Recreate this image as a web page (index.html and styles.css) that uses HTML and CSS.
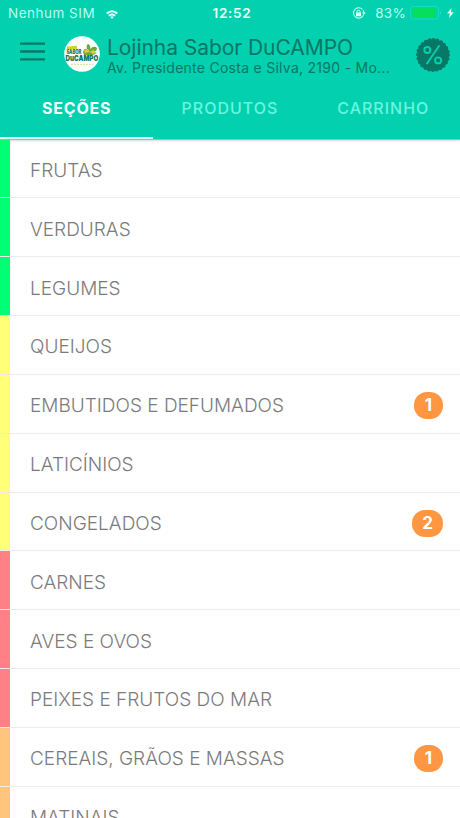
FILE: index.html
```html
<!DOCTYPE html>
<html lang="pt-BR">
<head>
<meta charset="utf-8">
<title>Lojinha Sabor DuCAMPO</title>
<link rel="stylesheet" href="styles.css">
</head>
<body>
<div class="app">
  <header class="header">
    <div class="status">
      <div class="carrier"><span class="sim">Nenhum SIM</span>
        <svg class="wifi" width="12" height="9" viewBox="0 0 12 9"><g fill="none" stroke="#e6fffa" stroke-width="2"><path d="M.7 3.5Q6-1 11.3 3.5"/><path d="M2.8 5.8Q6 3.1 9.2 5.8"/></g><path d="M4.2 7Q6 5.6 7.8 7L6 8.9Z" fill="#e6fffa"/></svg>
      </div>
      <time class="clock">12:52</time>
      <div class="power">
        <svg class="lock" width="14" height="13" viewBox="0 0 14 13"><path d="M10.5 2.4A5.2 5.2 0 1 0 11.6 7.6M11 3.3Q11.7 4.4 11.8 6" fill="none" stroke="#c5fff3" stroke-width="1.1"/><path d="M9.9 5.5h3.8L11.8 8z" fill="#c5fff3"/><rect x="4" y="5.5" width="5" height="3.7" rx=".5" fill="#e6fffa"/><path d="M5 5.7V4.6a1.5 1.5 0 0 1 3 0v1.1" fill="none" stroke="#e6fffa"/></svg>
        <span class="percent">83%</span>
        <svg class="battery" width="32" height="14" viewBox="0 0 32 14"><rect x=".6" y=".6" width="28" height="12.4" rx="3" fill="none" stroke="#1cdcc4" stroke-width="1"/><rect x="2.2" y="2.2" width="23.3" height="9.2" rx="1.4" fill="#05df5c"/><path d="M30.2 4.8Q32 6.8 30.2 8.8Z" fill="#35dfcd"/></svg>
        <svg class="bolt" width="7" height="10" viewBox="0 0 7 10"><path d="M4.5 0 0 5.4h2.8L2 10l4.8-5.8H4Z" fill="#e6fffa"/></svg>
      </div>
    </div>
    <div class="brand">
      <svg class="menu" width="25" height="19" viewBox="0 0 25 19"><path d="M0 1.6h25M0 9.5h25M0 17.3h25" stroke="#087766" stroke-width="2.3"/></svg>
      <svg class="logo" width="36" height="36" viewBox="0 0 36 36">
        <circle cx="18" cy="18" r="17.8" fill="#fff"/>
        <path d="m3 10.5 10-.8v3L3 13.5z" fill="#c9d72d"/>
        <path d="M19 16q1-4 4-3-1-4 1-5 3 1 2 5 4-4 7-1 0 4-5 4l5 1-4 2H20z" fill="#64ad45"/>
        <path d="m20 14 4-1 2 3-5 1zm6 2 3-2 3 2-3 2z" fill="#e4ca37"/>
        <text class="logo-small" x="2.4" y="18.4" textLength="15" lengthAdjust="spacingAndGlyphs">SABOR</text>
        <text class="logo-large" x="1.6" y="25.4" textLength="32.6" lengthAdjust="spacingAndGlyphs">DuCAMPO</text>
        <path d="M7 28.3h22" stroke="#d6df78" stroke-width="1" stroke-dasharray="2 1"/>
      </svg>
      <div class="shop"><h1 class="name">Lojinha Sabor DuCAMPO</h1><p class="address">Av. Presidente Costa e Silva, 2190 - Mo...</p></div>
      <svg class="offer" width="36" height="36" viewBox="0 0 36 36"><circle cx="18" cy="18" r="15.8" fill="#087766"/><circle cx="18" cy="18" r="15.2" fill="none" stroke="#087766" stroke-width="3.6" stroke-linecap="round" stroke-dasharray=".1 3.88"/><g fill="none" stroke="#02d0ae" stroke-width="1.9" stroke-linecap="round"><path d="M24 9 12 26.5"/><circle cx="12.3" cy="13" r="3"/><circle cx="23.1" cy="23.4" r="3"/></g></svg>
    </div>
    <nav class="tabs"><a class="tab active">SEÇÕES</a><a class="tab">PRODUTOS</a><a class="tab">CARRINHO</a></nav>
  </header>
  <main class="list">
    <div class="row green"><span>FRUTAS</span></div>
    <div class="row green"><span>VERDURAS</span></div>
    <div class="row green"><span>LEGUMES</span></div>
    <div class="row yellow"><span>QUEIJOS</span></div>
    <div class="row yellow"><span>EMBUTIDOS E DEFUMADOS</span><b class="badge">1</b></div>
    <div class="row yellow"><span>LATICÍNIOS</span></div>
    <div class="row yellow"><span>CONGELADOS</span><b class="badge wide">2</b></div>
    <div class="row red"><span>CARNES</span></div>
    <div class="row red"><span>AVES E OVOS</span></div>
    <div class="row red"><span>PEIXES E FRUTOS DO MAR</span></div>
    <div class="row orange"><span>CEREAIS, GRÃOS E MASSAS</span><b class="badge">1</b></div>
    <div class="row orange"><span>MATINAIS</span></div>
  </main>
</div>
</body>
</html>
```
FILE: styles.css
```css
* { box-sizing: border-box; }
body { margin: 0; background: #fff; font-family: Inter, "Liberation Sans", sans-serif; }
svg { display: block; flex: none; }
.app { height: 818px; overflow: hidden; }
.header { height: 139.6px; background: #02d0ae; border-bottom: 1px solid #79c9c5; box-shadow: 0 1px 2px rgba(0, 80, 80, .18); }
.status { height: 27px; display: grid; grid-template-columns: 1fr auto 1fr; align-items: center; padding: 0 6px 1px 8px; color: #b5fff0; font-size: 13.5px; line-height: 18px; }
.carrier, .power { display: flex; align-items: center; }
.sim { letter-spacing: .5px; }
.wifi { margin: 3px 0 0 11px; }
.clock { margin-left: 2px; color: #e9fffa; font-weight: 600; letter-spacing: .7px; }
.power { justify-content: flex-end; }
.lock { margin-right: 9px; }
.percent { letter-spacing: .3px; }
.battery { margin-left: 4px; }
.bolt { margin-left: 5px; }
.brand { height: 54px; display: flex; align-items: flex-start; padding: 9px 9px 0 20px; }
.menu { margin-top: 6px; }
.logo { margin-left: 19px; }
.logo-small { font: 900 5.6px Inter, sans-serif; fill: #168060; }
.logo-large { font: 900 8px Inter, sans-serif; fill: #087762; }
.shop { width: 309px; margin-left: 7px; color: #087766; white-space: nowrap; }
.name { margin: 0; font-size: 21px; line-height: 24px; font-weight: 400; letter-spacing: -.05px; }
.address { margin: 0; font-size: 14px; line-height: 16px; letter-spacing: .27px; }
.offer { margin: 1px 0 0 auto; }
.tabs { height: 57.6px; display: grid; grid-template-columns: repeat(3, 1fr); }
.tab { display: flex; justify-content: center; padding-top: 16px; color: #67f7e0; font-size: 16px; line-height: 22px; font-weight: 500; letter-spacing: 1px; border-bottom: 2.4px solid transparent; }
.active { color: #effffb; font-weight: 700; letter-spacing: .8px; border-color: #e5f7f4; }
.row { height: 58.84px; display: flex; align-items: center; justify-content: space-between; padding: 4px 17px 0 30px; background: linear-gradient(var(--band), var(--band)) 0 0 / 10px 100% no-repeat padding-box; border-bottom: 1px solid #ececec; font-size: 19px; }
.row span { color: #7b7b7b; font-weight: 300; }
.green { --band: #00ff75; }
.yellow { --band: #ffff78; }
.red { --band: #ff8086; }
.orange { --band: #ffc57d; }
.badge { width: 29px; height: 27px; border-radius: 13px; background: #ff9642; color: #fff; font-size: 17px; line-height: 27px; text-align: center; }
.wide { width: 31px; }
```
